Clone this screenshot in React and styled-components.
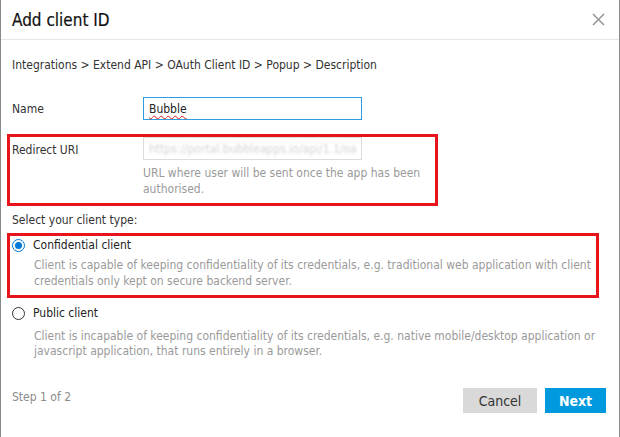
import React, { useState } from 'react';
import styled, { createGlobalStyle } from 'styled-components';

const GlobalStyle = createGlobalStyle`
  html, body {
    margin: 0;
    padding: 0;
    background: #ffffff;
  }
  body {
    font-family: "DejaVu Sans Condensed", "Liberation Sans Narrow", Roboto, sans-serif;
    color: #333333;
  }
  * {
    box-sizing: border-box;
  }
`;

const Dialog = styled.div`
  width: 620px;
  height: 437px;
  border-left: 1px solid #8a8a8a;
  border-right: 1px solid #8a8a8a;
  background: #ffffff;
  display: flex;
  flex-direction: column;
`;

const Header = styled.header`
  height: 40px;
  display: flex;
  align-items: center;
  justify-content: space-between;
  padding: 0 13px 0 11px;
  border-bottom: 1px solid #e6e6e6;
`;

const Title = styled.h1`
  margin: 0;
  font-size: 17px;
  font-weight: normal;
  color: #111111;
  -webkit-text-stroke: 0.2px #111111;
`;

const CloseButton = styled.button`
  background: transparent;
  border: none;
  padding: 0;
  width: 16px;
  height: 16px;
  display: flex;
  align-items: center;
  justify-content: center;
  cursor: pointer;
`;

const Body = styled.div`
  flex: 1;
  padding: 17px 12px 0 11px;
  display: flex;
  flex-direction: column;
  font-size: 12px;
`;

const Breadcrumb = styled.div`
  line-height: 16px;
  color: #333333;
  margin-bottom: 24px;
`;

const FieldRow = styled.div`
  display: grid;
  grid-template-columns: 131px 219px;
  align-items: start;
`;

const Label = styled.label`
  line-height: 16px;
  padding-top: ${(p) => p.$offset || 4}px;
`;

const InputBox = styled.div`
  width: 219px;
  height: 23px;
  border: 1px solid ${(p) => (p.$focused ? '#2a9fdb' : '#dcdcdc')};
  padding: 0 5px;
  display: flex;
  align-items: center;
  white-space: nowrap;
  font-size: 12px;
`;

const Value = styled.span`
  color: ${(p) => (p.$faded ? '#d4d4d4' : '#222222')};
  filter: ${(p) => (p.$faded ? 'blur(1.2px)' : 'none')};
  text-decoration: ${(p) => (p.$spell ? 'underline wavy #e02020' : 'none')};
  text-decoration-thickness: 1px;
  text-underline-offset: 2px;
`;

const Highlight = styled.div`
  border: 3px solid #e8141c;
  margin-left: -5px;
  padding: 0 0 6px 2px;
  width: ${(p) => p.$width}px;
`;

const Helper = styled.p`
  margin: 5px 0 0 131px;
  line-height: 16px;
  color: #9a9a9a;
  width: 280px;
`;

const SectionTitle = styled.div`
  line-height: 16px;
  margin: 6px 0 5px;
`;

const Option = styled.div`
  display: flex;
  flex-direction: column;
  padding-top: ${(p) => p.$top || 0}px;
`;

const OptionLabel = styled.label`
  display: flex;
  align-items: center;
  gap: 8px;
  line-height: 16px;
  color: #222222;
  cursor: pointer;
`;

const RadioCircle = styled.span`
  width: 13px;
  height: 13px;
  border-radius: 50%;
  border: 1px solid ${(p) => (p.$checked ? '#0078d7' : '#333333')};
  display: flex;
  align-items: center;
  justify-content: center;
  flex-shrink: 0;
  &::after {
    content: '';
    width: 7px;
    height: 7px;
    border-radius: 50%;
    background: ${(p) => (p.$checked ? '#0078d7' : 'transparent')};
  }
`;

const OptionText = styled.p`
  margin: ${(p) => p.$gap || 4}px 0 0 22px;
  line-height: ${(p) => p.$line || 16}px;
  color: #9a9a9a;
`;

const Footer = styled.footer`
  display: flex;
  align-items: flex-start;
  justify-content: space-between;
  padding: 0 13px 24px 11px;
`;

const StepText = styled.span`
  font-size: 12px;
  line-height: 16px;
  margin-top: 1px;
  color: #8c8c8c;
`;

const Actions = styled.div`
  display: flex;
  gap: 8px;
`;

const Button = styled.button`
  height: 25px;
  border: none;
  font: inherit;
  font-size: 14px;
  padding: 0;
  width: ${(p) => p.$width}px;
  background: ${(p) => (p.$primary ? '#0099dd' : '#d9d9d9')};
  color: ${(p) => (p.$primary ? '#ffffff' : '#333333')};
  font-weight: ${(p) => (p.$primary ? 'bold' : 'normal')};
  cursor: pointer;
`;

export default function App() {
  const [type, setType] = useState('confidential');

  return (
    <>
      <GlobalStyle />
      <Dialog>
        <Header>
          <Title>Add client ID</Title>
          <CloseButton aria-label="Close">
            <svg width="13" height="13" viewBox="0 0 13 13">
              <path d="M1 1 L12 12 M12 1 L1 12" stroke="#999999" strokeWidth="1.6" />
            </svg>
          </CloseButton>
        </Header>
        <Body>
          <Breadcrumb>
            Integrations &gt; Extend API &gt; OAuth Client ID &gt; Popup &gt; Description
          </Breadcrumb>

          <FieldRow>
            <Label $offset={4}>Name</Label>
            <InputBox $focused>
              <Value $spell>Bubble</Value>
            </InputBox>
          </FieldRow>

          <Highlight $width={431} style={{ marginTop: 14 }}>
            <FieldRow>
              <Label $offset={5}>Redirect URI</Label>
              <InputBox>
                <Value $faded>https://portal.bubbleapps.io/api/1.1/oa</Value>
              </InputBox>
            </FieldRow>
            <Helper>URL where user will be sent once the app has been authorised.</Helper>
          </Highlight>

          <SectionTitle>Select your client type:</SectionTitle>

          <Highlight $width={592}>
            <Option $top={1} onClick={() => setType('confidential')}>
              <OptionLabel>
                <RadioCircle $checked={type === 'confidential'} />
                Confidential client
              </OptionLabel>
              <OptionText $gap={4}>
                Client is capable of keeping confidentiality of its credentials, e.g. traditional web application with client
                credentials only kept on secure backend server.
              </OptionText>
            </Option>
          </Highlight>

          <Option $top={7} onClick={() => setType('public')}>
            <OptionLabel>
              <RadioCircle $checked={type === 'public'} />
              Public client
            </OptionLabel>
            <OptionText $gap={8} $line={15}>
              Client is incapable of keeping confidentiality of its credentials, e.g. native mobile/desktop application or
              javascript application, that runs entirely in a browser.
            </OptionText>
          </Option>
        </Body>
        <Footer>
          <StepText>Step 1 of 2</StepText>
          <Actions>
            <Button $width={74}>Cancel</Button>
            <Button $width={61} $primary>Next</Button>
          </Actions>
        </Footer>
      </Dialog>
    </>
  );
}
